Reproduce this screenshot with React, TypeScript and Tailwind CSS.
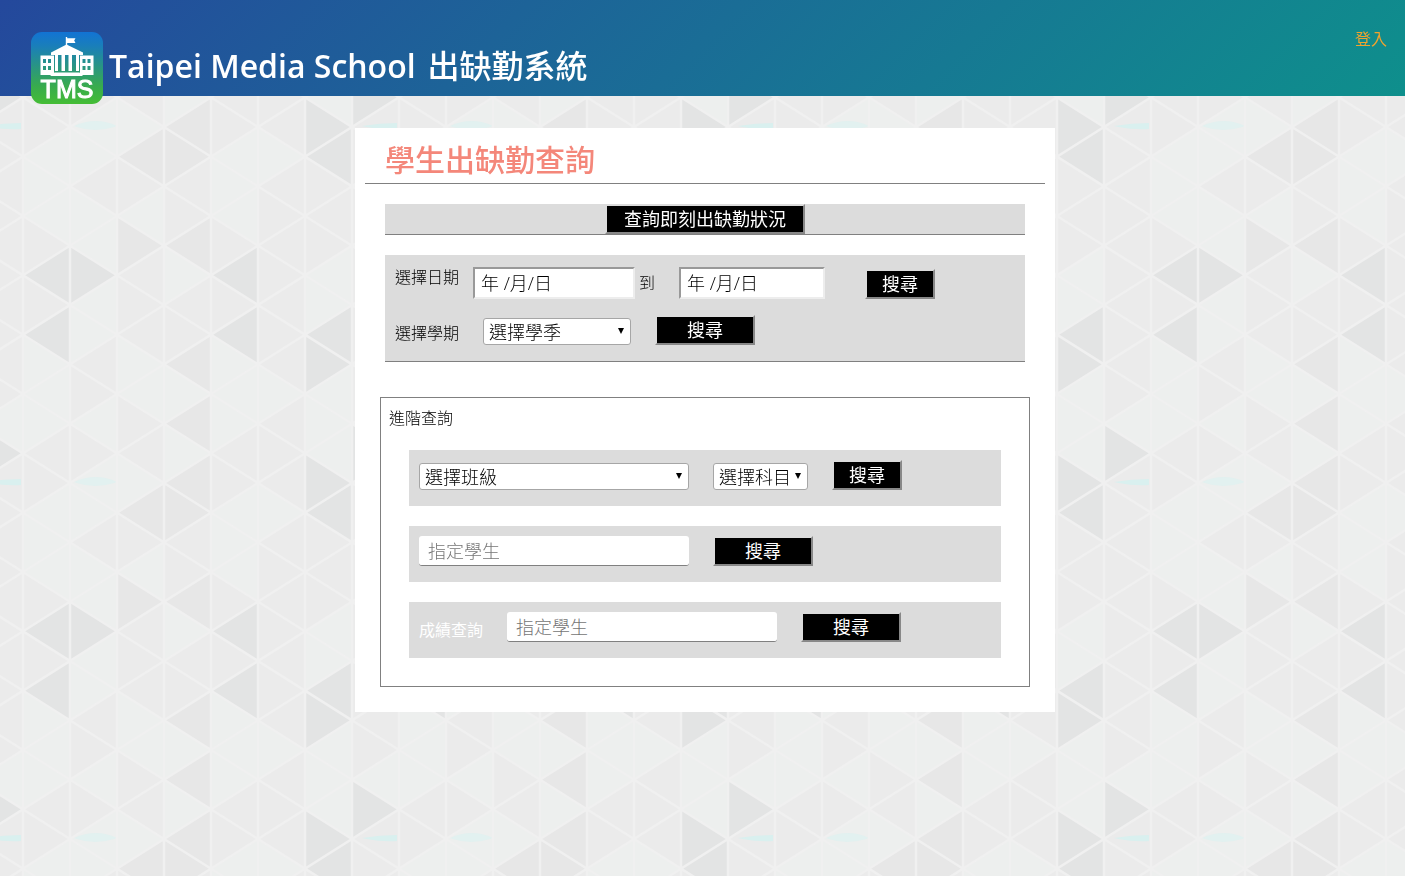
import type { ReactNode } from "react";

const COLUMN_WIDTH = 47;
const HALF_STEP = 356 / 12;
const TILE_WIDTH = COLUMN_WIDTH * 8;
const TILE_HEIGHT = 356;

// Shade index of each triangle, one string per column, top to bottom.
const SHADES = [
  "111111111103",
  "100013130001",
  "001003001101",
  "021021110011",
  "221120112020",
  "100013130001",
  "101111111011",
  "331110033000",
];
const SHADE_COLORS = ["#edefee", "#ebebeb", "#e7e7e7", "#e3e4e4"];

function TriangleBackground() {
  const triangles: ReactNode[] = [];
  SHADES.forEach((column, c) => {
    for (let h = 0; h <= 12; h++) {
      const left = c * COLUMN_WIDTH;
      const right = left + COLUMN_WIDTH;
      const y = h * HALF_STEP;
      const apexLeft = (h + c) % 2 === 0;
      const apex = apexLeft ? left : right;
      const base = apexLeft ? right : left;
      triangles.push(
        <polygon
          key={`${c}-${h}`}
          points={`${apex},${y} ${base},${y - HALF_STEP} ${base},${y + HALF_STEP}`}
          fill={SHADE_COLORS[Number(column[h % 12])]}
        />
      );
    }
  });
  const lines: string[] = [];
  for (let c = 0; c <= 8; c++) {
    lines.push(`M${c * COLUMN_WIDTH} 0V${TILE_HEIGHT}`);
  }
  for (let k = -8; k <= 20; k += 2) {
    lines.push(`M0 ${k * HALF_STEP}L${TILE_WIDTH} ${(k + 8) * HALF_STEP}`);
    lines.push(`M0 ${k * HALF_STEP}L${TILE_WIDTH} ${(k - 8) * HALF_STEP}`);
  }
  return (
    <svg className="fixed inset-0 -z-10 h-full w-full" aria-hidden="true">
      <defs>
        <pattern
          id="tile"
          width={TILE_WIDTH}
          height={TILE_HEIGHT}
          patternUnits="userSpaceOnUse"
          patternTransform="translate(-24 127)"
        >
          {triangles}
          <path d="M10 -1q18 -3 35 -3v6q-18 1 -35 -3z" fill="#d9f0ef" />
          <path d="M10 355q18 -3 35 -3v6q-18 1 -35 -3z" fill="#d9f0ef" />
          <path d="M98 -1q22 -10 43 0q-22 8 -43 0z" fill="#e2f1f0" />
          <path d="M98 355q22 -10 43 0q-22 8 -43 0z" fill="#e2f1f0" />
          <path d={lines.join("")} stroke="#f0f0f0" strokeWidth="2.5" fill="none" />
        </pattern>
      </defs>
      <rect width="100%" height="100%" fill="url(#tile)" />
    </svg>
  );
}

function Logo() {
  return (
    <svg viewBox="0 0 72 72" className="size-18 shrink-0" role="img" aria-label="TMS">
      <defs>
        <linearGradient id="logo" x1="0" y1="0" x2="0" y2="1">
          <stop offset="0" stopColor="#1273d4" />
          <stop offset="0.2" stopColor="#1a7fb9" />
          <stop offset="0.75" stopColor="#38ab4e" />
          <stop offset="1" stopColor="#45bd35" />
        </linearGradient>
      </defs>
      <rect width="72" height="72" rx="11" fill="url(#logo)" />
      <g fill="#fff">
        <path d="M34.8 5h1.4v1.2h8.3l-1.3 2.3 1.3 2.4h-8.3V15h-1.4z" />
        <path d="M35.5 12.5L52 20.5V23H20v-2.500z" />
        <path d="M24 22h3v17h-3zM30.500 22H34v17h-3.500zM37.500 22H41v17h-3.500zM45 22h3v17h-3z" />
        <path d="M23.500 40.500h25l3.500 3.500H19z" />
        <path
          fillRule="evenodd"
          d="M9.500 23.500H23V43H9.500zM12 27v4h3v-4zM17 27v4h3v-4zM12 34v4h3v-4zM17 34v4h3v-4z"
        />
        <path
          fillRule="evenodd"
          d="M49 23.500H62.500V43H49zM51.500 27v4h3v-4zM56.500 27v4h3v-4zM51.500 34v4h3v-4zM56.500 34v4h3v-4z"
        />
      </g>
      <path d="M18.500 44l4.500 -4.500h26l4.500 4.500" fill="none" stroke="#2c98790" strokeWidth="1" />
      <text
        x="36"
        y="66"
        textAnchor="middle"
        fontFamily="'Liberation Sans', sans-serif"
        fontSize="25"
        fill="#fff"
        stroke="#fff"
        strokeWidth="1"
      >
        TMS
      </text>
    </svg>
  );
}

function ActionButton({ children, className }: { children: ReactNode; className: string }) {
  return (
    <button
      type="button"
      className={`h-[30px] shrink-0 border-2 border-t-[#dcdcdc] border-r-[#888] border-b-[#888] border-l-[#dcdcdc] bg-black text-lg leading-none font-normal text-white ${className}`}
    >
      {children}
    </button>
  );
}

function SelectBox({ label, className }: { label: string; className: string }) {
  return (
    <div className={`relative h-[27px] shrink-0 ${className}`}>
      <select
        aria-label={label}
        className="h-full w-full appearance-none rounded-[3px] border border-[#a6a6a6] bg-white pl-[5px] text-lg leading-none text-black"
      >
        <option>{label}</option>
      </select>
      <svg viewBox="0 0 6 6" className="pointer-events-none absolute top-[10px] right-[7px] size-[6px]" aria-hidden="true">
        <path d="M0 0h6L3 6z" fill="#000" />
      </svg>
    </div>
  );
}

function DateBox({ id, className }: { id: string; className: string }) {
  return (
    <input
      id={id}
      type="text"
      placeholder="年 /月/日"
      className={`h-8 shrink-0 border-2 border-t-[#999] border-r-[#ededed] border-b-[#ededed] border-l-[#999] bg-white px-1.5 text-lg leading-none placeholder:text-black ${className}`}
    />
  );
}

function StudentBox({ id, label }: { id: string; label?: string }) {
  return (
    <input
      id={id}
      type="text"
      aria-label={label}
      placeholder="指定學生"
      className="h-[30px] w-[270px] shrink-0 rounded-[3px] border-b border-[#808080] bg-white px-[9px] text-lg leading-none placeholder:text-[#757575]"
    />
  );
}

export default function App() {
  return (
    <div className="isolate min-h-screen font-['Open_Sans','Noto_Sans_CJK_TC',sans-serif] text-base font-light text-black">
      <TriangleBackground />
      <header className="flex h-24 items-start bg-linear-135 from-[#24489c] to-[#0e8f8c] pr-[18px] pl-[31px]">
        <div className="flex pt-8">
          <Logo />
          <h1 className="flex gap-3 pt-2.5 pl-1.5 text-[32px] leading-12 font-semibold whitespace-nowrap text-white">
            <span>Taipei Media School</span>
            <span className="font-medium">出缺勤系統</span>
          </h1>
        </div>
        <a href="#login" className="mt-[27px] ml-auto leading-6 font-normal text-[#f0a32e]">
          登入
        </a>
      </header>

      <div className="pt-8 pl-[5px]">
        <main className="mx-auto w-full max-w-[700px] bg-white px-2.5 pb-[25px]">
          <h2 className="border-b border-[#808080] pt-2.5 pb-0.5 pl-5 text-[30px] leading-[43px] font-medium text-[#f4877a]">
            學生出缺勤查詢
          </h2>

          <section className="mx-5 mt-5 flex justify-center border-b border-[#808080] bg-[#dcdcdc]">
            <ActionButton className="w-[200px]">查詢即刻出缺勤狀況</ActionButton>
          </section>

          <section className="mx-5 mt-5 flex flex-col gap-4 border-b border-[#808080] bg-[#dcdcdc] px-2.5 pt-3 pb-4">
            <div className="flex items-start">
              <label htmlFor="from" className="w-[78px] shrink-0 leading-5">
                選擇日期
              </label>
              <DateBox id="from" className="w-[162px]" />
              <label htmlFor="to" className="w-11 shrink-0 self-center pl-1 leading-6">
                到
              </label>
              <DateBox id="to" className="w-[146px]" />
              <ActionButton className="ml-10 w-[70px] self-end">搜尋</ActionButton>
            </div>
            <div className="flex items-end">
              <span className="w-[88px] shrink-0 leading-6">選擇學期</span>
              <SelectBox label="選擇學季" className="w-[148px]" />
              <ActionButton className="ml-6 w-[100px]">搜尋</ActionButton>
            </div>
          </section>

          <section className="mx-[15px] mt-[35px] border border-[#808080] px-7 pb-7">
            <h3 className="-ml-5 pt-2 pb-5 leading-6">進階查詢</h3>
            <div className="flex flex-col gap-5">
              <div className="flex h-14 items-start bg-[#dcdcdc] px-2.5 pt-2.5">
                <div className="flex items-end gap-6">
                  <SelectBox label="選擇班級" className="w-[270px]" />
                  <SelectBox label="選擇科目" className="w-[95px]" />
                  <ActionButton className="w-[70px]">搜尋</ActionButton>
                </div>
              </div>
              <div className="flex h-14 items-start gap-6 bg-[#dcdcdc] px-2.5 pt-2.5">
                <StudentBox id="student" label="指定學生" />
                <ActionButton className="w-[100px]">搜尋</ActionButton>
              </div>
              <div className="flex h-14 items-start gap-6 bg-[#dcdcdc] px-2.5 pt-2.5">
                <label htmlFor="grades" className="shrink-0 pt-1.5 leading-6 font-normal text-white">
                  成績查詢
                </label>
                <StudentBox id="grades" />
                <ActionButton className="w-[100px]">搜尋</ActionButton>
              </div>
            </div>
          </section>
        </main>
      </div>
    </div>
  );
}
